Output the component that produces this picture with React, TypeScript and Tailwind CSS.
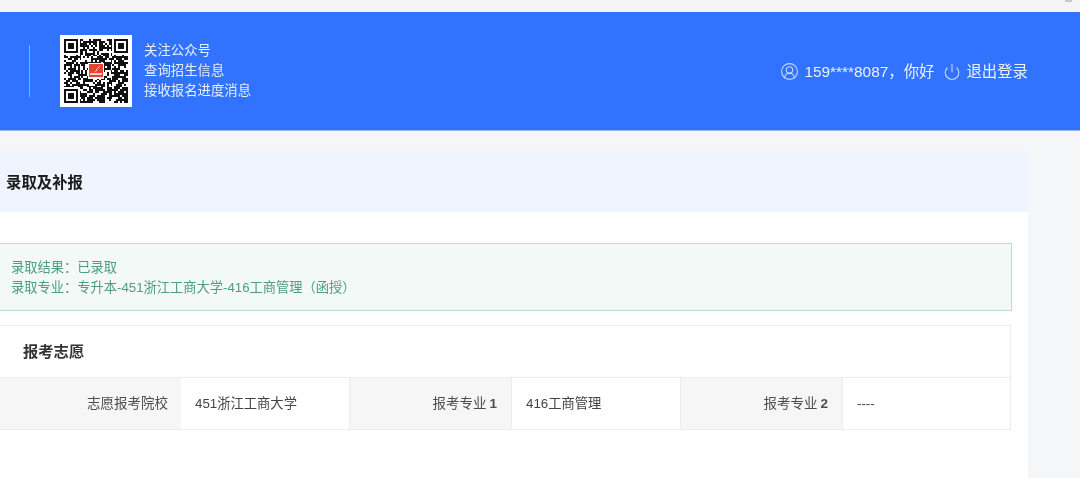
import { CircleUserRound, Power } from "lucide-react";

const N = 33;
function isFinder(x: number, y: number) {
  return (x < 8 && y < 8) || (x >= N - 8 && y < 8) || (x < 8 && y >= N - 8);
}
function modules() {
  const cells: [number, number][] = [];
  let seed = 73;
  for (let y = 0; y < N; y++) {
    for (let x = 0; x < N; x++) {
      seed = (seed * 1103515245 + 12345) & 0x7fffffff;
      if (isFinder(x, y)) continue;
      if ((seed >> 16) % 100 < 60) cells.push([x, y]);
    }
  }
  return cells;
}
function Finder({ x, y }: { x: number; y: number }) {
  return (
    <g>
      <rect x={x} y={y} width="7" height="7" fill="#111" />
      <rect x={x + 1} y={y + 1} width="5" height="5" fill="#fff" />
      <rect x={x + 2} y={y + 2} width="3" height="3" fill="#111" />
    </g>
  );
}
function QrCode() {
  return (
    <svg viewBox="0 0 33 33" className="h-[64px] w-[64px]" shapeRendering="crispEdges">
      {modules().map(([x, y]) => (
        <rect key={`${x}-${y}`} x={x} y={y} width="1" height="1" fill="#111" />
      ))}
      <Finder x={0} y={0} />
      <Finder x={26} y={0} />
      <Finder x={0} y={26} />
      <rect x="12.5" y="12.5" width="8" height="8" fill="#fff" />
      <rect x="13" y="13" width="7" height="6.8" fill="#e2452f" />
      <rect x="13.6" y="17.6" width="5.8" height="1" fill="#f7c9c0" />
      <path d="M16 16.8 L18.6 14" stroke="#f7c9c0" strokeWidth="0.5" />
    </svg>
  );
}

function Label({ children, num, first }: { children: string; num?: string; first?: boolean }) {
  return (
    <div
      className={`flex items-center justify-end bg-[#f6f6f6] pt-[1px] text-[13.5px] text-[#4d4d4d] ${
        first ? "pr-[13px]" : "border-x border-[#ececec] pr-[14px]"
      }`}
    >
      {children}
      {num ? <span className="ml-[3px] font-bold">{num}</span> : null}
    </div>
  );
}
function Value({ children }: { children: string }) {
  return <div className="flex items-center bg-white pl-[14px] pt-[1px] text-[13.3px] text-[#444]">{children}</div>;
}

export default function App() {
  return (
    <div
      className="relative h-[478px] w-[1080px] overflow-hidden bg-[#f5f6f8] blur-[0.3px]"
      style={{ fontFamily: '"Liberation Sans", "Noto Sans CJK SC", sans-serif' }}
    >
      <div className="absolute right-[8px] top-0 h-[2px] w-[7px] bg-[#c8c8c8]" />
      <div className="h-[12px] bg-[#f5f5f5]" />
      <header className="flex h-[119px] items-center justify-between border-b border-[#9db4dc] bg-[#3173ff] pr-[52px]">
        <div className="flex items-center">
          <div className="ml-[29px] h-[52px] w-px bg-white/40" />
          <div className="ml-[30px] flex h-[72px] w-[72px] items-center justify-center bg-white">
            <QrCode />
          </div>
          <div className="ml-[12px] text-[13.4px] leading-[20px] text-[#e6eeff]">
            <p>关注公众号</p>
            <p>查询招生信息</p>
            <p>接收报名进度消息</p>
          </div>
        </div>
        <div className="flex items-center pt-[2px] text-[15.4px] text-[#eaf1ff]">
          <CircleUserRound size={19} strokeWidth={1.4} className="text-white/70" />
          <span className="ml-[5px]">159****8087，你好</span>
          <Power size={18} strokeWidth={1.5} className="ml-[9px] text-white/70" />
          <span className="ml-[5px]">退出登录</span>
        </div>
      </header>

      <main className="mt-[20px] h-[327px] w-[1028px] bg-white">
        <div className="flex h-[61px] items-center bg-[#f0f4fe] pl-[6px] pt-[2px] text-[15.4px] font-bold text-[#1c1c1c]">
          录取及补报
        </div>
        <div className="pr-[16px] pt-[31px]">
          <div className="h-[68px] border-y border-r border-[#b6dfd1] bg-[#f3f9f7] pl-[11px] pt-[14px] text-[13.25px] leading-[20px] text-[#4f9c85]">
            <p>录取结果：已录取</p>
            <p>录取专业：专升本-451浙江工商大学-416工商管理（函授）</p>
          </div>
        </div>
        <div className="mr-[17px] mt-[14px] h-[105px] border-y border-r border-[#ececec]">
          <div className="flex h-[52px] items-center border-b border-[#ececec] pl-[23px] pt-[1px] text-[15.3px] font-bold text-[#333]">
            报考志愿
          </div>
          <div className="grid h-[51px] grid-cols-[181px_168px_163px_168px_163px_1fr]">
            <Label first>志愿报考院校</Label>
            <Value>451浙江工商大学</Value>
            <Label num="1">报考专业</Label>
            <Value>416工商管理</Value>
            <Label num="2">报考专业</Label>
            <Value>----</Value>
          </div>
        </div>
      </main>
    </div>
  );
}
